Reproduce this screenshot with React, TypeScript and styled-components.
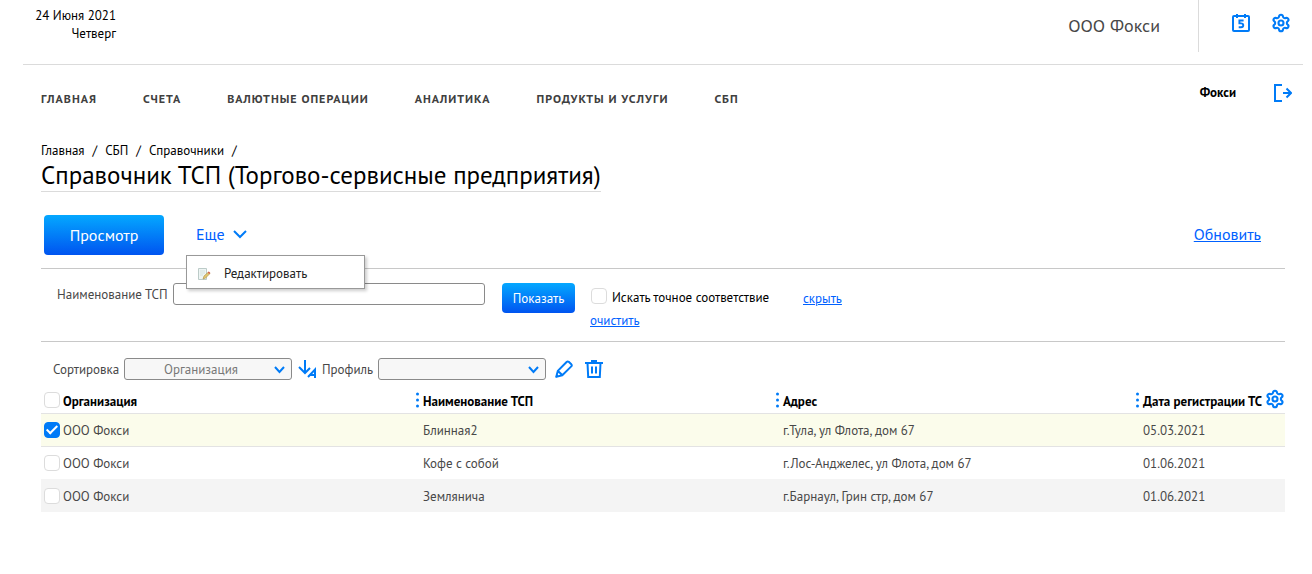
import React, { useState } from 'react';
import styled, { createGlobalStyle } from 'styled-components';
import { Settings } from 'lucide-react';

const blue = '#007bf7';
const link = '#0061ff';

const GlobalStyle = createGlobalStyle`
  *, *::before, *::after { box-sizing: border-box; }
  body {
    margin: 0;
    background: #fff;
    color: #000;
    font: 13px/18px "PT Sans", "Noto Sans", sans-serif;
  }
  button, input, select { font: inherit; color: inherit; margin: 0; }
  svg { display: block; flex: none; }
`;

const Header = styled.header`
  display: flex;
  justify-content: space-between;
  align-items: flex-start;
  height: 65px;
  margin: 0 9px 0 23px;
  padding: 0 12px 0 10px;
  border-bottom: 1px solid #dbdbdb;
`;

const Today = styled.div`
  min-width: 83px;
  padding-top: 7px;
  text-align: right;
`;

const HeaderSide = styled.div`
  display: flex;
  height: 52px;
`;

const Company = styled.div`
  padding-right: 38px;
  color: #484848;
  font-size: 18px;
  line-height: 52px;
`;

const HeaderTools = styled.div`
  display: flex;
  align-items: flex-start;
  gap: 20px;
  padding: 13px 0 0 32px;
  border-left: 1px solid #dbdbdb;
`;

const IconButton = styled.button`
  display: flex;
  padding: 0;
  border: 0;
  background: none;
  color: ${blue};
  cursor: pointer;
`;

const NavRow = styled.div`
  display: flex;
  justify-content: space-between;
  align-items: flex-start;
  height: 77px;
  padding: 0 20px 0 41px;
`;

const Nav = styled.nav`
  display: flex;
  gap: 46px;
  padding-top: 25px;
`;

const NavLink = styled.a`
  color: #404040;
  font-size: 12px;
  font-weight: 700;
  letter-spacing: 1px;
  text-decoration: none;
  text-transform: uppercase;
`;

const User = styled.div`
  display: flex;
  gap: 38px;
  padding-top: 19px;
  font-weight: 700;
`;

const Main = styled.main`
  padding: 0 27px 32px 41px;
`;

const Crumbs = styled.nav`
  display: flex;
  gap: 8px;
`;

const CrumbLink = styled.a`
  color: #000;
  text-decoration: none;
`;

const Title = styled.h1`
  width: fit-content;
  margin: 0;
  border-bottom: 1px solid #dbdbdb;
  font-size: 25px;
  font-weight: 400;
  line-height: 31px;
`;

const Toolbar = styled.div`
  display: flex;
  align-items: center;
  margin-top: 23px;
  padding: 0 24px 13px 3px;
  border-bottom: 1px solid #c8c8c8;
`;

const PrimaryButton = styled.button<{ $small?: boolean }>`
  min-width: ${p => (p.$small ? 73 : 120)}px;
  height: ${p => (p.$small ? 30 : 40)}px;
  padding: ${p => (p.$small ? 2 : 0)}px 8px 0;
  border: 0;
  border-radius: 4px;
  background: linear-gradient(#04a8ff, #0054f0);
  color: #fff;
  font-size: ${p => (p.$small ? 13 : 16)}px;
  cursor: pointer;
`;

const More = styled.div`
  position: relative;
  margin-left: 32px;
`;

const MoreButton = styled.button`
  display: flex;
  align-items: center;
  gap: 8px;
  height: 40px;
  padding: 0 0 2px;
  border: 0;
  background: none;
  color: ${link};
  font-size: 16px;
  cursor: pointer;
`;

const Menu = styled.div`
  position: absolute;
  z-index: 1;
  top: 100%;
  left: -10px;
  width: 179px;
  border: 1px solid #999;
  background: #fff;
  box-shadow: 2px 2px 3px rgba(0, 0, 0, 0.2);
`;

const MenuItem = styled.button`
  display: flex;
  align-items: center;
  gap: 13px;
  width: 100%;
  height: 32px;
  padding: 3px 10px 0;
  border: 0;
  background: none;
  color: #222;
  cursor: pointer;
`;

const TextLink = styled.a<{ $large?: boolean }>`
  color: ${link};
  font-size: ${p => (p.$large ? 16 : 13)}px;
`;

const Refresh = styled.div`
  margin-left: auto;
`;

const Filter = styled.form`
  display: flex;
  align-items: flex-start;
  padding: 14px 16px 11px;
  border-bottom: 1px solid #c8c8c8;
`;

const Label = styled.label`
  flex: none;
  padding-top: 1px;
  color: #484848;
  line-height: 22px;
`;

const NameLabel = styled(Label)`
  min-width: 116px;
`;

const TextField = styled.input`
  width: 312px;
  height: 22px;
  margin-right: 17px;
  padding: 0 6px;
  border: 1px solid #8a8a8a;
  border-radius: 3px;
  background: #fff;
`;

const FilterOptions = styled.div`
  display: flex;
  flex-direction: column;
  align-items: flex-start;
  gap: 5px;
  width: 213px;
  margin-left: 15px;
  padding-top: 5px;
`;

const CheckLabel = styled.label`
  display: flex;
  gap: 5px;
  padding-left: 1px;
`;

const CheckText = styled.span`
  padding-top: 1px;
`;

const HideFilter = styled.div`
  padding-top: 7px;
`;

const Checkbox = styled.input.attrs({ type: 'checkbox' })`
  display: flex;
  justify-content: center;
  flex: none;
  appearance: none;
  width: 16px;
  height: 16px;
  border: 1px solid #dcdcdc;
  border-radius: 4px;
  background: #fff;

  &:checked {
    border-color: ${blue};
    background: ${blue};
  }

  &:checked::after {
    content: '';
    width: 6px;
    height: 11px;
    border: solid #fff;
    border-width: 0 2px 2px 0;
    transform: rotate(45deg);
  }
`;

const SortBar = styled.div`
  display: flex;
  align-items: flex-start;
  padding: 16px 12px 6px;
`;

const SortLabel = styled(Label)`
  min-width: 71px;
`;

const ProfileLabel = styled(Label)`
  min-width: 56px;
`;

const SelectBox = styled.div`
  display: grid;
  align-items: center;
  width: 168px;
  margin-right: 6px;

  > * { grid-area: 1 / 1; }
  > svg { justify-self: end; margin: 2px 7px 0 0; pointer-events: none; }
`;

const Select = styled.select`
  appearance: none;
  width: 100%;
  height: 22px;
  padding: 2px 16px 0 2px;
  border: 1px solid #8a8a8a;
  border-radius: 3px;
  background: #f7f7f7;
  color: #777;
  text-align-last: center;
`;

const SortActions = styled.div<{ $gap: number; $left?: number }>`
  display: flex;
  gap: ${p => p.$gap}px;
  margin: 2px 5px 0 ${p => p.$left ?? 0}px;
`;

const Table = styled.table`
  width: 100%;
  table-layout: fixed;
  border-collapse: separate;
  border-spacing: 0;
`;

const Col = styled.col<{ $width?: number }>`
  width: ${p => (p.$width ? `${p.$width}px` : 'auto')};
`;

const HeadCell = styled.th`
  height: 27px;
  padding: 0 0 0 3px;
  border-bottom: 1px solid #e3e3e3;
  font-weight: 700;
  text-align: left;
  white-space: nowrap;
`;

const CellInner = styled.div`
  display: flex;
  align-items: center;
  gap: 3px;
`;

const HeadText = styled.span`
  padding-top: 3px;
`;

const CellText = styled.span`
  padding-top: 2px;
`;

const GearSlot = styled.span`
  display: flex;
  margin: 0 0 2px auto;
`;

const Row = styled.tr<{ $tone: 'selected' | 'plain' | 'striped' }>`
  background: ${p => ({ selected: '#fbfceb', plain: '#fff', striped: '#f4f4f4' })[p.$tone]};

  > td {
    border-bottom: ${p => (p.$tone === 'selected' ? '1px solid #e3e3e3' : '0')};
    height: ${p => (p.$tone === 'plain' ? 32 : 33)}px;
  }
`;

const Cell = styled.td<{ $first?: boolean }>`
  padding: ${p => (p.$first ? '0 0 0 3px' : '2px 0 0 10px')};
  color: #484848;
`;

const CalendarIcon = () => (
  <svg width="20" height="20" viewBox="0 0 20 20" fill="none" stroke="currentColor" strokeWidth="2">
    <rect x="2" y="3" width="16" height="15" rx="1" />
    <path d="M6 1v4M14 1v4" />
    <path d="M12.600 7.500H8.400v2.900h1.600c3 0 3 3.800 0 3.800H7.700" strokeWidth="1.900" />
  </svg>
);

const LogoutIcon = () => (
  <svg width="18" height="18" viewBox="0 0 18 18" fill="none" stroke="currentColor" strokeWidth="2">
    <path d="M8 1H1v16h7" />
    <path d="M9 9h8M12.500 4.500L17 9l-4.500 4.500" />
  </svg>
);

const ChevronIcon = ({ width, height }: { width: number; height: number }) => (
  <svg width={width} height={height} viewBox={`0 0 ${width} ${height}`} fill="none" stroke={blue} strokeWidth="2">
    <path d={`M1 1L${width / 2} ${height - 2}L${width - 1} 1`} />
  </svg>
);

const SortIcon = () => (
  <svg width="19" height="18" viewBox="0 0 19 18" fill="none" stroke="currentColor" strokeWidth="2">
    <path d="M7 0v13M1 7l6 6 5-5" />
    <path d="M10 17l7-7.500V18M12 15h5" />
  </svg>
);

const PencilIcon = () => (
  <svg width="18" height="18" viewBox="0 0 18 18" fill="none" stroke="currentColor" strokeWidth="2">
    <path d="M1.300 16.700l1.500-5.800L11.600 2q1-1 2.100-.2l2.600 2.500q.9 1.100 0 2.100L7.300 15.200zM3 11l4.200 4" strokeLinejoin="round" />
    <path d="M.5 17.500l.8-3 2.200 2.200z" fill="currentColor" stroke="none" />
  </svg>
);

const TrashIcon = () => (
  <svg width="18" height="18" viewBox="0 0 18 18" fill="none" stroke="currentColor" strokeWidth="2">
    <path d="M0 3h18M6 1h6M2.500 3l.7 14h11.600l.7-14M7 6.500v7M11 6.500v7" />
  </svg>
);

const DotsIcon = () => (
  <svg width="4" height="16" viewBox="0 0 4 16" fill={blue}>
    <circle cx="1.500" cy="2" r="1.500" />
    <circle cx="1.500" cy="8" r="1.500" />
    <circle cx="1.500" cy="14" r="1.500" />
  </svg>
);

const EditPageIcon = () => (
  <svg width="14" height="14" viewBox="0 0 14 14">
    <path d="M1.500 1.500h8v11h-8z" fill="#eef5f4" stroke="#bccbc8" />
    <path d="M3 4h5M3 6h5M3 8h3" stroke="#d3e1de" />
    <path d="M6 12l1-3 4.500-4 1.500 1.600L8.500 11z" fill="#e3c66f" stroke="#a98f45" strokeWidth=".6" />
    <path d="M10.700 5.500l1.200-1 1.500 1.600-1.200 1z" fill="#d2604e" />
  </svg>
);

const navItems = ['Главная', 'Счета', 'Валютные операции', 'Аналитика', 'Продукты и услуги', 'СБП'];
const crumbs = ['Главная', 'СБП', 'Справочники'];
const columns = ['Наименование ТСП', 'Адрес', 'Дата регистрации ТС'];
const records = [
  { org: 'ООО Фокси', name: 'Блинная2', address: 'г.Тула, ул Флота, дом 67', date: '05.03.2021' },
  { org: 'ООО Фокси', name: 'Кофе с собой', address: 'г.Лос-Анджелес, ул Флота, дом 67', date: '01.06.2021' },
  { org: 'ООО Фокси', name: 'Землянича', address: 'г.Барнаул, Грин стр, дом 67', date: '01.06.2021' },
];

export default function App() {
  const [selected, setSelected] = useState<number[]>([0]);
  const [menuOpen, setMenuOpen] = useState(true);

  const toggle = (index: number) =>
    setSelected(list => (list.includes(index) ? list.filter(i => i !== index) : [...list, index]));
  const allSelected = selected.length === records.length;

  return (
    <>
      <GlobalStyle />
      <Header>
        <Today>24 Июня 2021<br />Четверг</Today>
        <HeaderSide>
          <Company>ООО Фокси</Company>
          <HeaderTools>
            <IconButton aria-label="Календарь"><CalendarIcon /></IconButton>
            <IconButton aria-label="Настройки"><Settings size={20} strokeWidth={2.5} /></IconButton>
          </HeaderTools>
        </HeaderSide>
      </Header>
      <NavRow>
        <Nav>
          {navItems.map(item => <NavLink key={item} href="#">{item}</NavLink>)}
        </Nav>
        <User>
          Фокси
          <IconButton aria-label="Выйти"><LogoutIcon /></IconButton>
        </User>
      </NavRow>
      <Main>
        <Crumbs>
          {crumbs.map(item => (
            <React.Fragment key={item}>
              <CrumbLink href="#">{item}</CrumbLink>
              <span>/</span>
            </React.Fragment>
          ))}
        </Crumbs>
        <Title>Справочник ТСП (Торгово-сервисные предприятия)</Title>
        <Toolbar>
          <PrimaryButton>Просмотр</PrimaryButton>
          <More>
            <MoreButton aria-expanded={menuOpen} onClick={() => setMenuOpen(open => !open)}>
              Еще <ChevronIcon width={14} height={9} />
            </MoreButton>
            {menuOpen && (
              <Menu>
                <MenuItem><EditPageIcon />Редактировать</MenuItem>
              </Menu>
            )}
          </More>
          <Refresh><TextLink href="#" $large>Обновить</TextLink></Refresh>
        </Toolbar>
        <Filter onSubmit={event => event.preventDefault()}>
          <NameLabel htmlFor="name">Наименование ТСП</NameLabel>
          <TextField id="name" type="text" />
          <PrimaryButton $small>Показать</PrimaryButton>
          <FilterOptions>
            <CheckLabel><Checkbox /><CheckText>Искать точное соответствие</CheckText></CheckLabel>
            <TextLink href="#">очистить</TextLink>
          </FilterOptions>
          <HideFilter><TextLink href="#">скрыть</TextLink></HideFilter>
        </Filter>
        <SortBar>
          <SortLabel htmlFor="sort">Сортировка</SortLabel>
          <SelectBox>
            <Select id="sort"><option>Организация</option></Select>
            <ChevronIcon width={11} height={8} />
          </SelectBox>
          <SortActions $gap={0}>
            <IconButton aria-label="Порядок сортировки"><SortIcon /></IconButton>
          </SortActions>
          <ProfileLabel htmlFor="profile">Профиль</ProfileLabel>
          <SelectBox>
            <Select id="profile"><option></option></Select>
            <ChevronIcon width={11} height={8} />
          </SelectBox>
          <SortActions $gap={12} $left={3}>
            <IconButton aria-label="Изменить профиль"><PencilIcon /></IconButton>
            <IconButton aria-label="Удалить профиль"><TrashIcon /></IconButton>
          </SortActions>
        </SortBar>
        <Table>
          <colgroup>
            <Col $width={372} />
            <Col $width={360} />
            <Col $width={360} />
            <Col />
          </colgroup>
          <thead>
            <tr>
              <HeadCell>
                <CellInner>
                  <Checkbox
                    aria-label="Выбрать все"
                    checked={allSelected}
                    onChange={() => setSelected(allSelected ? [] : records.map((_, i) => i))}
                  />
                  <HeadText>Организация</HeadText>
                </CellInner>
              </HeadCell>
              {columns.map((column, i) => (
                <HeadCell key={column}>
                  <CellInner>
                    <DotsIcon />
                    <HeadText>{column}</HeadText>
                    {i === columns.length - 1 && (
                      <GearSlot>
                        <IconButton aria-label="Настройка столбцов"><Settings size={20} strokeWidth={2.5} /></IconButton>
                      </GearSlot>
                    )}
                  </CellInner>
                </HeadCell>
              ))}
            </tr>
          </thead>
          <tbody>
            {records.map((record, i) => (
              <Row key={i} $tone={selected.includes(i) ? 'selected' : i % 2 ? 'plain' : 'striped'}>
                <Cell $first>
                  <CellInner>
                    <Checkbox
                      aria-label={`Выбрать ${record.name}`}
                      checked={selected.includes(i)}
                      onChange={() => toggle(i)}
                    />
                    <CellText>{record.org}</CellText>
                  </CellInner>
                </Cell>
                <Cell>{record.name}</Cell>
                <Cell>{record.address}</Cell>
                <Cell>{record.date}</Cell>
              </Row>
            ))}
          </tbody>
        </Table>
      </Main>
    </>
  );
}
